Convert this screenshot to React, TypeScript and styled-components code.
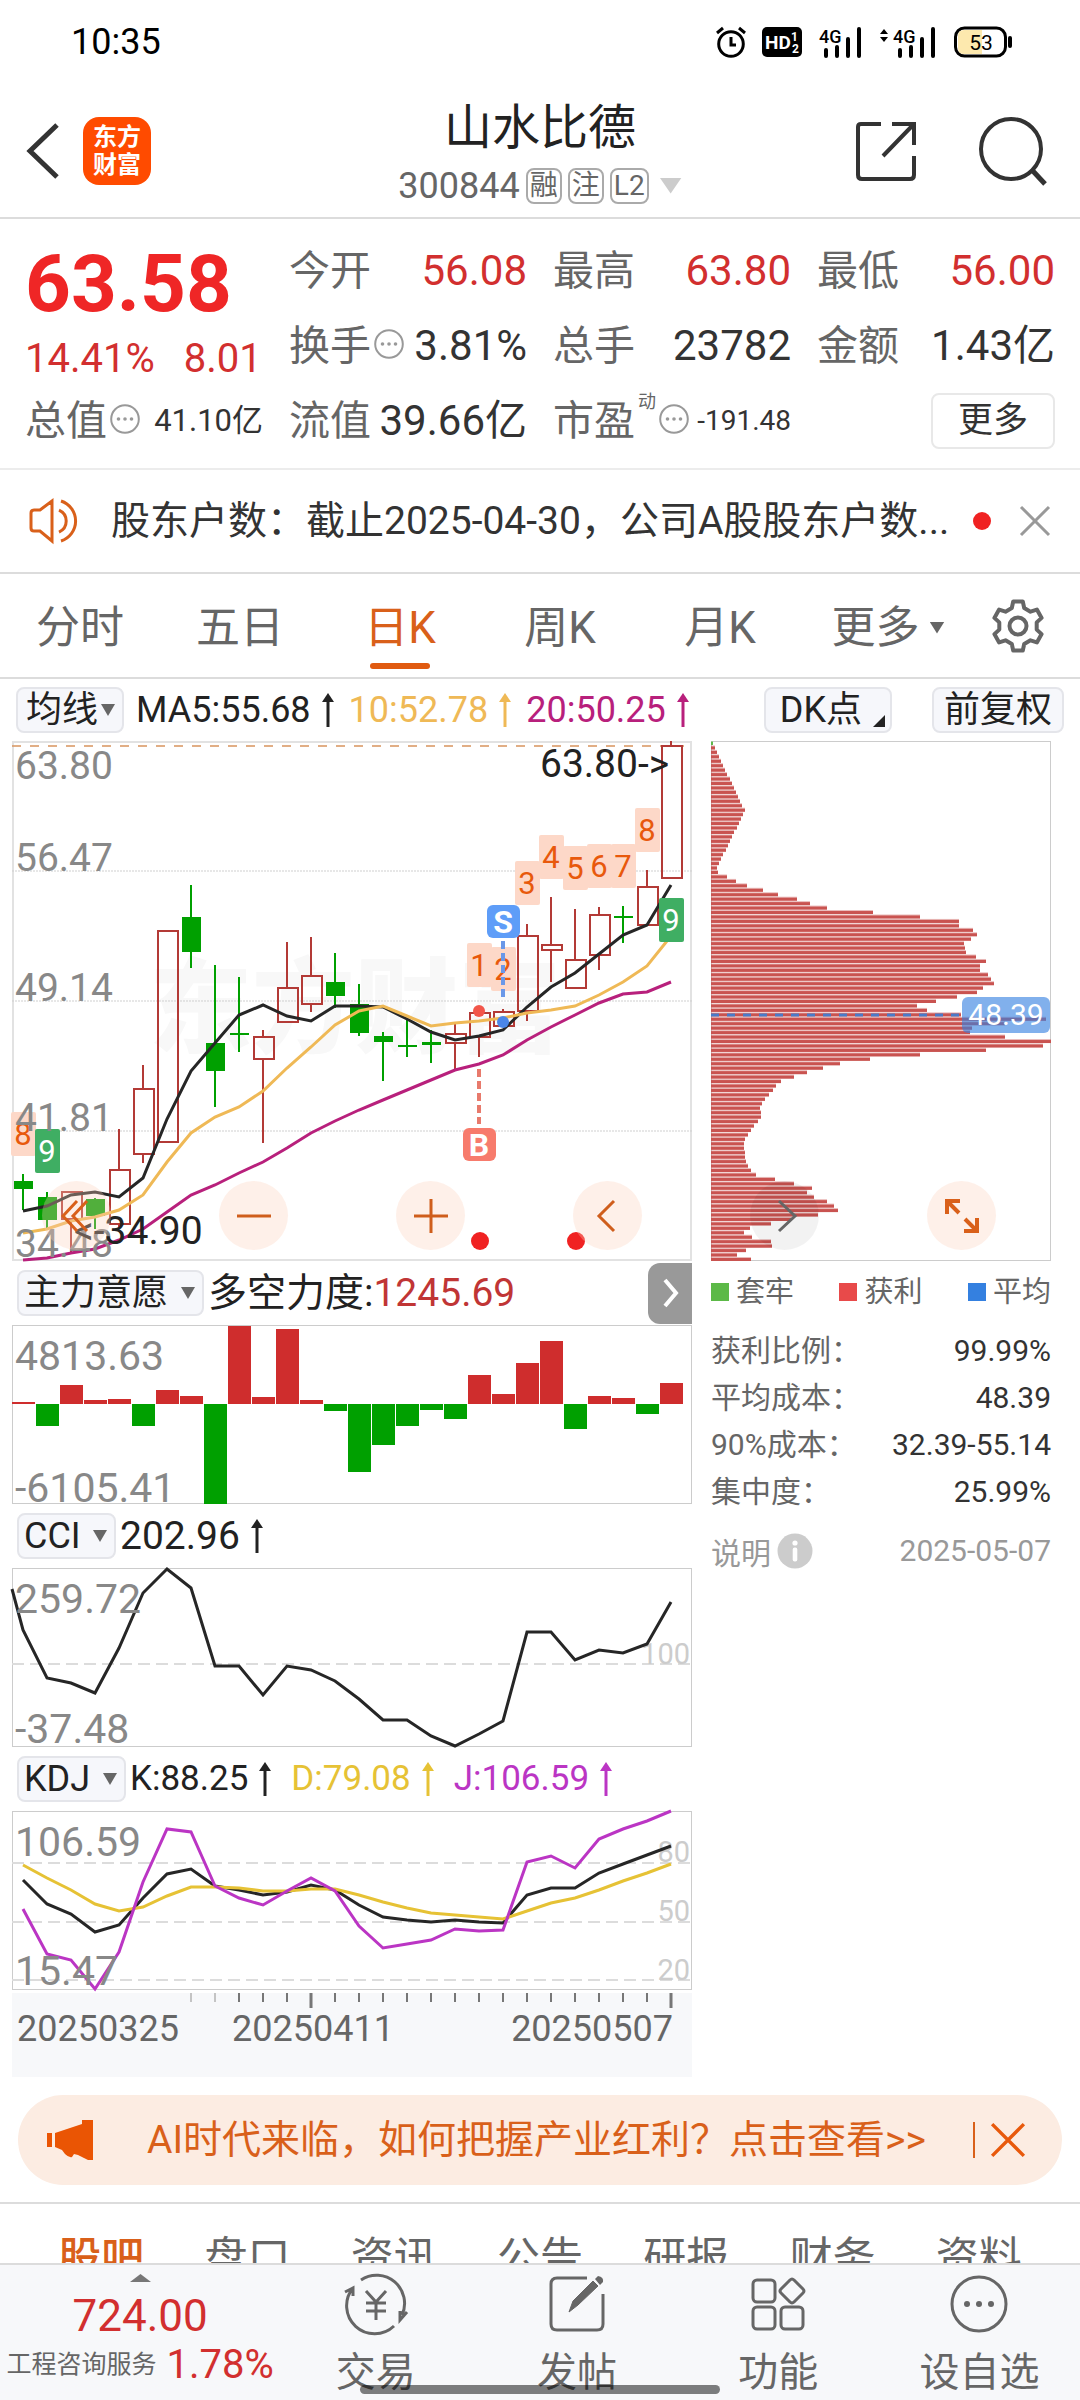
import React from "react";
import styled, { createGlobalStyle } from "styled-components";

const C = {
  ink: "#333333",
  sub: "#666666",
  faint: "#999999",
  red: "#d22f2f",
  orange: "#d9601a",
  line: "#dcdcdc",
  up: "#b33a36",
  upFill: "#cf2d2d",
  down: "#00a000",
  ma5: "#262626",
  ma10: "#efb956",
  ma20: "#b8207c",
  dYellow: "#e6c235",
  jPurple: "#bb35c4",
  panel: "#f7f8fa",
};

const Global = createGlobalStyle`
  *, *::before, *::after { box-sizing: border-box; }
  html, body { margin: 0; background: #fff; }
  body, button, select { font-family: Roboto, "Noto Sans CJK SC", sans-serif; }
  button, select { margin: 0; padding: 0; border: 0; background: none; color: inherit; font-size: inherit; cursor: pointer; }
  svg { display: block; flex: none; overflow: visible; }
  svg text { font-family: Roboto, "Noto Sans CJK SC", sans-serif; }
`;

const Screen = styled.div`
  display: flex;
  flex-direction: column;
  height: 100vh;
  background: #fff;
  color: ${C.ink};
  overflow: hidden;
`;

const Scroll = styled.main`
  flex: 1;
  min-height: 0;
  overflow: hidden;
`;

/* ---------- status bar ---------- */

const StatusBar = styled.div`
  display: flex;
  align-items: center;
  justify-content: space-between;
  height: 84px;
  padding: 0 68px 0 71px;
  color: #000;
  font-size: 36px;
  line-height: 40px;
`;

const StatusIcons = styled.div`
  display: flex;
  align-items: center;
  gap: 16px;
`;

/* ---------- header ---------- */

const Header = styled.header`
  display: grid;
  grid-template-columns: 1fr auto 1fr;
  align-items: center;
  height: 135px;
  padding: 0 26px;
  border-bottom: 2px solid ${C.line};
`;

const HeaderSide = styled.div<{ $end?: boolean }>`
  display: flex;
  align-items: center;
  justify-content: ${(p) => (p.$end ? "flex-end" : "flex-start")};
  gap: ${(p) => (p.$end ? 62 : 23)}px;
`;

const IconButton = styled.button`
  display: flex;
  align-items: center;
  justify-content: center;
`;

const Logo = styled.a`
  display: flex;
  flex-direction: column;
  justify-content: center;
  width: 68px;
  height: 68px;
  border-radius: 16px;
  background: #ff4b00;
  color: #fff;
  font-size: 24px;
  font-weight: 700;
  line-height: 28px;
  text-align: center;
  text-decoration: none;
`;

const TitleBlock = styled.div`
  display: flex;
  flex-direction: column;
  align-items: center;
  gap: 10px;
`;

const Title = styled.h1`
  margin: 0;
  color: #222;
  font-size: 48px;
  font-weight: 400;
  line-height: 60px;
`;

const CodeRow = styled.div`
  display: flex;
  align-items: center;
  gap: 6px;
  color: ${C.sub};
  font-size: 36px;
  line-height: 36px;
`;

const Tag = styled.span`
  min-width: 36px;
  height: 36px;
  padding: 0 2px;
  border: 2px solid #aaa;
  border-radius: 8px;
  font-size: 28px;
  line-height: 32px;
  text-align: center;
`;

const FoldButton = styled(IconButton)`
  margin-left: 5px;
`;

/* ---------- quote ---------- */

const Quote = styled.section`
  display: grid;
  grid-template-columns: repeat(4, 1fr);
  grid-template-rows: repeat(3, 75px);
  column-gap: 26px;
  padding: 14px 25px 10px;
  border-bottom: 2px solid #ececec;
`;

const PriceBlock = styled.div`
  display: flex;
  flex-direction: column;
  grid-row: span 2;
  gap: 11px;
  padding-top: 9px;
`;

const Price = styled.div`
  color: #ef2626;
  font-size: 80px;
  font-weight: 700;
  line-height: 84px;
`;

const Change = styled.div`
  display: flex;
  gap: 29px;
  color: ${C.red};
  font-size: 40px;
  line-height: 44px;
`;

const Cell = styled.div`
  display: flex;
  align-items: center;
  justify-content: space-between;
  white-space: nowrap;
`;

const Label = styled.span`
  display: flex;
  align-items: center;
  gap: 3px;
  color: ${C.sub};
  font-size: 41px;
  line-height: 48px;
`;

const Sup = styled.sup`
  align-self: flex-start;
  margin-top: -5px;
  font-size: 18px;
  line-height: 20px;
`;

const Value = styled.span<{ $red?: boolean; $size?: number }>`
  color: ${(p) => (p.$red ? C.red : C.ink)};
  font-size: ${(p) => p.$size ?? 42}px;
  line-height: 48px;
`;

const MoreButton = styled.button`
  width: 124px;
  height: 56px;
  margin-left: auto;
  border: 2px solid #e8e8e8;
  border-radius: 8px;
  font-size: 35px;
  line-height: 48px;
`;

/* ---------- notice ---------- */

const Notice = styled.div`
  display: flex;
  align-items: center;
  height: 104px;
  padding: 0 30px 0 29px;
  border-bottom: 2px solid ${C.line};
`;

const NoticeText = styled.span`
  flex: 1;
  margin-left: 29px;
  font-size: 39px;
  line-height: 48px;
  white-space: nowrap;
`;

const Dot = styled.i`
  width: 18px;
  height: 18px;
  margin-right: 29px;
  border-radius: 50%;
  background: #f02222;
`;

/* ---------- period tabs ---------- */

const PeriodTabs = styled.nav`
  display: grid;
  grid-template-columns: repeat(5, 160fr) 176fr 84fr;
  height: 105px;
  padding-right: 20px;
  border-bottom: 2px solid ${C.line};
`;

const PeriodTab = styled.button<{ $on?: boolean }>`
  display: flex;
  align-items: center;
  justify-content: center;
  gap: 10px;
  position: relative;
  padding-top: 4px;
  color: ${(p) => (p.$on ? C.orange : C.sub)};
  font-size: 44px;
  line-height: 52px;

  &::after {
    content: ${(p) => (p.$on ? '""' : "none")};
    position: absolute;
    bottom: 8px;
    width: 60px;
    height: 6px;
    border-radius: 3px;
    background: #e05a10;
  }
`;

const Caret = styled.i<{ $w?: number; $h?: number; $color?: string }>`
  flex: none;
  width: ${(p) => p.$w ?? 14}px;
  height: ${(p) => p.$h ?? 12}px;
  background: ${(p) => p.$color ?? C.sub};
  clip-path: polygon(0 0, 100% 0, 50% 100%);
`;

/* ---------- indicator headers ---------- */

const MaBar = styled.div`
  display: flex;
  align-items: center;
  gap: 12px;
  height: 62px;
  padding: 0 16px;
  font-size: 36px;
  line-height: 46px;
`;

const IndicatorBar = styled.div`
  display: flex;
  align-items: center;
  gap: 4px;
  position: relative;
  height: 64px;
  padding: 0 0 0 5px;
  font-size: 39px;
  line-height: 46px;
`;

const Picker = styled.span`
  display: inline-flex;
  align-items: center;
  position: relative;

  select {
    height: 46px;
    padding: 0 33px 0 5px;
    border: 2px solid #e4e5ea;
    border-radius: 8px;
    background: #f6f7fb;
    appearance: none;
    color: #222;
    font-size: 36px;
    line-height: 42px;
  }

  ${Caret} {
    position: absolute;
    right: 9px;
    pointer-events: none;
  }
`;

const TightPicker = styled(Picker)`
  select {
    padding: 0 23px 0 8px;
  }
`;

const Reading = styled.span<{ $color?: string; $size?: number; $gap?: number }>`
  display: inline-flex;
  align-items: center;
  gap: ${(p) => p.$gap ?? 11}px;
  color: ${(p) => p.$color ?? "#222"};
  font-size: ${(p) => p.$size ?? 39}px;
  white-space: nowrap;
`;

const Readings = styled.div<{ $gap: number }>`
  display: flex;
  align-items: center;
  gap: ${(p) => p.$gap}px;
`;

const ChipGroup = styled.div`
  display: flex;
  gap: 40px;
  margin-left: auto;
`;

const Chip = styled.button<{ $corner?: boolean }>`
  position: relative;
  height: 46px;
  padding: ${(p) => (p.$corner ? "0 28px 0 14px" : "0 10px")};
  border: 2px solid #e4e5ea;
  border-radius: 8px;
  background: #f6f7fb;
  color: #222;
  font-size: 36px;
  line-height: 42px;

  &::after {
    content: ${(p) => (p.$corner ? '""' : "none")};
    position: absolute;
    right: 5px;
    bottom: 4px;
    width: 12px;
    height: 12px;
    background: #222;
    clip-path: polygon(100% 0, 100% 100%, 0 100%);
  }
`;

const ExpandTab = styled.button`
  display: flex;
  align-items: center;
  justify-content: center;
  width: 44px;
  height: 61px;
  margin-left: auto;
  border-radius: 12px 0 0 12px;
  background: #999;
`;

/* ---------- charts ---------- */

const Charts = styled.section`
  display: grid;
  grid-template-columns: 680fr 340fr;
  column-gap: 19px;
  padding: 0 29px 0 12px;
`;

const Frame = styled.div<{ $edge?: string; $w?: number }>`
  position: relative;
  box-shadow: inset 0 0 0 ${(p) => p.$w ?? 1}px ${(p) => p.$edge ?? "#cccccc"};

  > svg {
    width: 100%;
    height: auto;
  }
`;

const Overlay = styled.div<{ $l: number; $r: number }>`
  position: absolute;
  left: ${(p) => p.$l}px;
  right: ${(p) => p.$r}px;
  bottom: 11px;
  display: flex;
  justify-content: space-between;
`;

const RoundButton = styled.button<{ $gray?: boolean }>`
  display: flex;
  align-items: center;
  justify-content: center;
  width: 69px;
  height: 69px;
  border-radius: 50%;
  background: ${(p) => (p.$gray ? "rgba(0,0,0,.05)" : "rgba(252,208,186,.32)")};
`;

const TimeAxis = styled.div`
  margin-top: 3px;
  background: ${C.panel};

  > svg {
    width: 100%;
    height: auto;
  }
`;

/* ---------- chip distribution details ---------- */

const Legend = styled.ul`
  display: flex;
  justify-content: space-between;
  margin: 0;
  padding: 8px 0 12px;
  list-style: none;
`;

const LegendItem = styled.li<{ $color: string }>`
  display: flex;
  align-items: center;
  gap: 7px;
  color: ${C.sub};
  font-size: 29px;
  line-height: 46px;

  &::before {
    content: "";
    width: 18px;
    height: 18px;
    background: ${(p) => p.$color};
  }
`;

const Stats = styled.table`
  width: 100%;
  border-collapse: collapse;
  font-size: 30px;
  line-height: 47px;

  th {
    padding: 0;
    color: ${C.sub};
    font-weight: 400;
    text-align: left;
    white-space: nowrap;
  }
  td {
    padding: 0;
    text-align: right;
    white-space: nowrap;
  }
`;

const Footnote = styled.div`
  display: flex;
  align-items: center;
  justify-content: space-between;
  margin-top: 13px;
  color: ${C.faint};
  font-size: 30px;
  line-height: 46px;
`;

const Explain = styled.button`
  display: flex;
  align-items: center;
  gap: 6px;
`;

/* ---------- banner ---------- */

const Banner = styled.aside`
  display: flex;
  align-items: center;
  height: 90px;
  margin: 18px 18px 17px;
  padding: 0 37px 0 29px;
  border-radius: 45px;
  background: #fcece2;
  color: ${C.orange};
`;

const BannerLink = styled.a`
  flex: 1;
  margin-left: 54px;
  color: inherit;
  font-size: 39px;
  line-height: 48px;
  text-decoration: none;
  white-space: nowrap;
`;

const Divider = styled.i`
  width: 2px;
  height: 36px;
  margin-right: 16px;
  background: ${C.orange};
`;

const ContentTabs = styled.nav`
  display: flex;
  padding: 24px 28px 0;
  border-top: 2px solid ${C.line};
`;

const ContentTab = styled.button<{ $on?: boolean }>`
  flex: 1;
  color: ${(p) => (p.$on ? C.orange : C.sub)};
  font-size: 43px;
  font-weight: ${(p) => (p.$on ? 500 : 400)};
  line-height: 60px;
`;

/* ---------- bottom bar ---------- */

const BottomBar = styled.footer`
  display: grid;
  grid-template-columns: 275fr repeat(4, 201fr);
  position: relative;
  height: 137px;
  border-top: 2px solid ${C.line};
  background: #f7f8fa;
`;

const IndexCell = styled.button`
  display: flex;
  flex-direction: column;
  align-items: center;
  padding: 9px 0 0 5px;
  color: ${C.red};
`;

const IndexValue = styled.span`
  margin-top: 9px;
  font-size: 44px;
  line-height: 50px;
`;

const IndexRow = styled.span`
  display: flex;
  align-items: center;
  gap: 10px;
  font-size: 40px;
  line-height: 48px;
  white-space: nowrap;
`;

const IndexName = styled.span`
  color: ${C.sub};
  font-size: 25px;
`;

const NavButton = styled.button`
  display: flex;
  flex-direction: column;
  align-items: center;
  gap: 13px;
  padding-top: 9px;
  color: ${C.sub};
  font-size: 40px;
  line-height: 52px;
`;

const HomeBar = styled.i`
  position: absolute;
  left: 50%;
  bottom: 6px;
  width: 360px;
  height: 9px;
  margin-left: -180px;
  border-radius: 5px;
  background: rgba(0, 0, 0, 0.5);
`;

/* ---------- icons ---------- */

const Dots = ({ size = 30 }: { size?: number }) => (
  <svg width={size} height={size} viewBox="0 0 30 30" fill="none">
    <circle cx="15" cy="13" r="13.8" stroke="#999" strokeWidth="2" />
    <g fill="#999">
      <circle cx="8.5" cy="13" r="1.8" />
      <circle cx="15" cy="13" r="1.8" />
      <circle cx="21.5" cy="13" r="1.8" />
    </g>
  </svg>
);

const Close = ({ size, color, w }: { size: number; color: string; w: number }) => (
  <svg width={size} height={size} viewBox="0 0 30 30" stroke={color} strokeWidth={w} fill="none">
    <path d="M1 1L29 29M29 1L1 29" />
  </svg>
);

const UpArrow = ({ color = "#222" }: { color?: string }) => (
  <svg width="12" height="34" viewBox="0 0 12 34">
    <path d="M6 0L12 9H0Z" fill={color} />
    <path d="M6 6V34" stroke={color} strokeWidth="3" />
  </svg>
);

const gearPath = (() => {
  const pts: string[] = [];
  for (let k = 0; k < 6; k++) {
    const base = -90 + k * 60;
    [
      [-19, 19],
      [-11, 25],
      [11, 25],
      [19, 19],
    ].forEach(([a, r]) => {
      const t = ((base + a) * Math.PI) / 180;
      pts.push(`${(27 + r * Math.cos(t)).toFixed(1)} ${(27 + r * Math.sin(t)).toFixed(1)}`);
    });
  }
  return `M${pts.join("L")}Z`;
})();

const Signal = ({ roaming }: { roaming?: boolean }) => (
  <svg width={roaming ? 58 : 46} height="32" viewBox={roaming ? "-12 0 58 32" : "0 0 46 32"}>
    {roaming && <path d="M-12 8L-8 3L-4 8ZM-12 11L-8 16L-4 11Z" fill="#000" />}
    <text x="1" y="17" fontSize="18" fontWeight="500">4G</text>
    <path d="M8 24V30M19 21V30M30 13V30M41 3V30" stroke="#000" strokeWidth="4" strokeLinecap="round" />
  </svg>
);

/* ---------- chart data ---------- */

const STEP = 24;
const cx = (i: number) => 11 + STEP * i;
const line = (ys: number[]) => ys.map((y, i) => `${cx(i)},${y}`).join(" ");

type Candle = [dir: "u" | "d", high: number, top: number, bottom: number, low: number];
const candles: Candle[] = [
  ["d", 433, 440, 448, 469], ["d", 451, 456, 479, 488], ["u", 450, 451, 478, 511], ["d", 457, 458, 475, 488],
  ["u", 388, 429, 483, 487], ["u", 324, 348, 413, 422], ["u", 190, 190, 401, 401], ["d", 144, 176, 211, 227],
  ["d", 224, 302, 330, 366], ["d", 236, 292, 294, 311], ["u", 289, 296, 318, 402], ["u", 201, 247, 281, 281],
  ["u", 196, 235, 263, 271], ["d", 212, 241, 255, 267], ["d", 243, 263, 292, 295], ["d", 291, 295, 301, 340],
  ["d", 279, 304, 306, 316], ["d", 289, 301, 304, 322], ["u", 283, 293, 302, 328], ["u", 266, 272, 296, 316],
  ["u", 268, 271, 285, 285], ["u", 183, 195, 270, 280], ["u", 156, 204, 209, 241], ["u", 168, 219, 247, 247],
  ["u", 166, 174, 214, 229], ["d", 165, 175, 177, 202], ["u", 129, 146, 184, 184], ["u", 0, 5, 137, 138],
];
const ma5 = [470, 465, 454, 451, 456, 437, 378, 330, 302, 274, 264, 275, 280, 265, 265, 266, 278, 291, 299, 295, 289, 266, 246, 232, 213, 194, 184, 144];
const ma10 = [492, 488, 480, 476, 469, 454, 421, 392, 376, 366, 350, 327, 306, 284, 270, 265, 275, 285, 282, 280, 277, 272, 269, 265, 254, 241, 225, 195];
const ma20 = [519, 517, 512, 508, 499, 488, 471, 454, 444, 432, 421, 407, 392, 380, 369, 359, 349, 339, 329, 323, 314, 299, 286, 274, 262, 253, 251, 241];

const signals: [index: number, y: number, label: string, done?: boolean][] = [
  [0, 371, "8"], [1, 388, "9", true], [19, 202, "1"], [20, 206, "2"], [21, 120, "3"], [22, 94, "4"],
  [23, 105, "5"], [24, 103, "6"], [25, 103, "7"], [26, 67, "8"],
];

const force = [2, -22, 19, 4, 5, -22, 14, 8, -100, 78, 7, 75, 4, -7, -68, -41, -22, -6, -15, 29, 10, 41, 63, -25, 8, 6, -10, 21];
const cci = [62, 110, 115, 125, 80, 25, 1, 20, 98, 98, 127, 98, 102, 113, 131, 152, 152, 168, 178, 166, 153, 64, 64, 92, 82, 85, 76, 34];
const kLine = [69, 93, 103, 121, 114, 87, 63, 58, 75, 79, 84, 81, 74, 79, 94, 106, 109, 111, 109, 111, 112, 84, 77, 77, 62, 53, 44, 35];
const dLine = [54, 67, 79, 93, 100, 96, 85, 76, 76, 77, 80, 80, 78, 78, 84, 91, 97, 102, 104, 106, 108, 100, 92, 87, 79, 70, 62, 53];
const jLine = [98, 143, 149, 178, 141, 71, 18, 21, 75, 87, 94, 80, 67, 80, 115, 137, 133, 129, 118, 120, 119, 51, 45, 57, 28, 18, 10, 0];

const chips = [
  2, 4, 6, 8, 10, 12, 14, 16, 19, 21, 23, 25, 27, 29, 31, 34, 32, 30, 28, 26, 23, 21, 19, 17, 15, 12, 10, 8, 6, 7, 16, 25, 36, 52, 67,
  86, 99, 116, 162, 209, 248, 248, 262, 266, 260, 253, 254, 255, 265, 275, 269, 269, 277, 280, 283, 272, 266, 246, 225, 206, 216, 250,
  335, 294, 261, 259, 294, 340, 332, 275, 209, 159, 129, 112, 96, 83, 70, 65, 62, 58, 54, 51, 49, 50, 50, 47, 43, 40, 37, 34, 33, 33,
  34, 34, 35, 37, 40, 45, 64, 83, 101, 96, 103, 116, 123, 127, 107, 80, 60, 39, 33, 41, 60, 61, 35, 26, 40,
];

const AxisText = ({ y, children, size = 41 }: { y: number; children: string; size?: number }) => (
  <text x="3" y={y} fontSize={size} fill="#888">{children}</text>
);

const RightText = ({ y, children }: { y: number; children: string }) => (
  <text x="678" y={y} fontSize="29" fill="#ccc" textAnchor="end">{children}</text>
);

const KLineChart = () => (
  <svg viewBox="0 0 680 520" role="img" aria-label="日K">
    <text x="137" y="304" fontSize="103" fontWeight="900" fill="#f8f8f8">东方财富</text>
    {[130, 260, 390].map((y) => (
      <path key={y} d={`M0 ${y}H680`} stroke="#cfcfcf" strokeDasharray="2 1" />
    ))}
    <path d="M0 5H672" stroke="#d99a66" strokeWidth="2" strokeOpacity=".8" strokeDasharray="9 9" />
    {signals.map(([i, y, label, done]) => (
      <g key={`${i}-${label}`}>
        <rect x={cx(i) - 12} y={y} width="25" height="44" rx="2" fill={done ? "#3fae63" : "#fdd8c8"} />
        <text x={cx(i)} y={y + 33} fontSize="31" textAnchor="middle" fill={done ? "#fff" : "#e8590c"}>{label}</text>
      </g>
    ))}
    {candles.map(([dir, high, top, bottom, low], i) =>
      dir === "u" ? (
        <g key={i} stroke={C.up} strokeWidth="2" fill="none">
          <path d={`M${cx(i)} ${high}V${top}M${cx(i)} ${bottom}V${low}`} />
          <rect x={cx(i) - 9} y={top} width="20" height={bottom - top} />
        </g>
      ) : (
        <g key={i}>
          <path d={`M${cx(i)} ${high}V${low}`} stroke={C.down} strokeWidth="2" />
          <rect x={cx(i) - 9} y={top} width="19" height={bottom - top} fill={C.down} />
        </g>
      )
    )}
    <g fill="none" strokeWidth="3">
      <polyline points={line(ma20)} stroke={C.ma20} />
      <polyline points={line(ma5)} stroke={C.ma5} />
      <polyline points={line(ma10)} stroke={C.ma10} />
    </g>
    <rect x="647" y="157" width="25" height="44" rx="2" fill="#3fae63" />
    <text x="659" y="190" fontSize="31" textAnchor="middle" fill="#fff">9</text>
    <g strokeWidth="4" strokeDasharray="8 4" fill="none">
      <path d="M491 200V256" stroke="#6a98e8" />
      <path d="M467 328V383" stroke="#e87a6c" />
    </g>
    <circle cx="467" cy="270" r="6" fill="#f2564a" />
    <circle cx="491" cy="281" r="6" fill="#4a86e8" />
    <g fontSize="32" fontWeight="700" textAnchor="middle" fill="#fff">
      <rect x="475" y="164" width="33" height="33" rx="6" fill="#5e9df8" />
      <text x="491" y="192">S</text>
      <rect x="451" y="387" width="33" height="33" rx="6" fill="#f77b6c" />
      <text x="467" y="415">B</text>
    </g>
    <AxisText y={38} size={39}>63.80</AxisText>
    <AxisText y={130} size={39}>56.47</AxisText>
    <AxisText y={260} size={39}>49.14</AxisText>
    <AxisText y={390} size={39}>41.81</AxisText>
    <AxisText y={516} size={39}>34.48</AxisText>
    <text x="528" y="36" fontSize="39" fill="#222">63.80-&gt;</text>
    <text x="62" y="503" fontSize="39" fill="#222">&lt;-34.90</text>
    <circle cx="468" cy="500" r="9" fill="#f02222" />
    <circle cx="564" cy="500" r="9" fill="#f02222" />
  </svg>
);

const ChipChart = () => {
  const pitch = 516 / (chips.length - 1);
  return (
    <svg viewBox="0 0 340 520" role="img" aria-label="筹码分布">
      {chips.map((w, i) => (
        <g key={i} fill={i ? "#c95350" : "#5fb84a"}>
          <rect x="0" y={i * pitch} width={w} height="4" fillOpacity=".4" />
          <rect x="0" y={1 + i * pitch} width={w} height="3" />
        </g>
      ))}
      <path d="M0 274H251" stroke="#4a7ac8" strokeWidth="3" strokeDasharray="8 8" />
      <rect x="251" y="256" width="88" height="36" rx="6" fill="#3480e0" fillOpacity=".62" />
      <text x="295" y="284" fontSize="30" textAnchor="middle" fill="#fff">48.39</text>
    </svg>
  );
};

const ForceChart = () => (
  <svg viewBox="0 0 680 179" role="img" aria-label="主力意愿">
    {force.map((v, i) => (
      <rect key={i} x={i * STEP} y={v > 0 ? 79 - v : 79} width="23" height={Math.abs(v)} fill={v > 0 ? C.upFill : C.down} />
    ))}
    <AxisText y={45}>4813.63</AxisText>
    <AxisText y={177}>-6105.41</AxisText>
  </svg>
);

const CciChart = () => (
  <svg viewBox="0 0 680 179" role="img" aria-label="CCI">
    <path d="M0 96H680" stroke="#dcdcdc" strokeWidth="2" strokeDasharray="12 6" />
    <RightText y={96}>100</RightText>
    <polyline points={`0,21 ${line(cci)}`} fill="none" stroke={C.ma5} strokeWidth="3" />
    <AxisText y={45}>259.72</AxisText>
    <AxisText y={175}>-37.48</AxisText>
  </svg>
);

const KdjChart = () => (
  <svg viewBox="0 0 680 179" role="img" aria-label="KDJ">
    {[52, 111, 169].map((y) => (
      <path key={y} d={`M0 ${y}H680`} stroke="#dcdcdc" strokeWidth="2" strokeDasharray="12 6" />
    ))}
    <RightText y={51}>80</RightText>
    <RightText y={110}>50</RightText>
    <RightText y={169}>20</RightText>
    <g fill="none" strokeWidth="3">
      <polyline points={line(kLine)} stroke={C.ma5} />
      <polyline points={line(dLine)} stroke={C.dYellow} />
      <polyline points={line(jLine)} stroke={C.jPurple} />
    </g>
    <AxisText y={45}>106.59</AxisText>
    <AxisText y={174}>15.47</AxisText>
  </svg>
);

const TimeTicks = () => (
  <svg viewBox="0 0 680 84" role="img" aria-label="日期">
    {Array.from({ length: 21 }, (_, k) => k + 7).map((i) => {
      const major = i === 12 || i === 27;
      return (
        <path key={i} d={`M${cx(i)} 0V${major ? 15 : 9}`} stroke={i < 9 ? "#c4c4c4" : "#777"} strokeWidth={major ? 3 : 2} />
      );
    })}
    <g fontSize="36" fill="#666">
      <text x="5" y="48">20250325</text>
      <text x="220" y="48">20250411</text>
      <text x="661" y="48" textAnchor="end">20250507</text>
    </g>
  </svg>
);

const Select = ({ value, label }: { value: string; label: string }) => (
  <Picker>
    <select aria-label={label} defaultValue={value}>
      <option>{value}</option>
    </select>
    <Caret />
  </Picker>
);

export default function App() {
  return (
    <Screen>
      <Global />
      <Scroll>
        <StatusBar>
          <span>10:35</span>
          <StatusIcons>
            <svg width="30" height="32" viewBox="0 0 30 32" fill="none" stroke="#000" strokeWidth="3">
              <circle cx="15" cy="18" r="12.3" />
              <path d="M15 11V19H20M1 7L7 2M29 7L23 2" />
            </svg>
            <svg width="40" height="32" viewBox="0 0 40 32">
              <rect y="1" width="40" height="30" rx="5" />
              <g fill="#fff" fontWeight="700">
                <text x="3" y="23" fontSize="19">HD</text>
                <text x="29" y="15" fontSize="12">1</text>
                <text x="30" y="27" fontSize="12">2</text>
              </g>
            </svg>
            <Signal />
            <Signal roaming />
            <svg width="58" height="32" viewBox="0 0 58 32">
              <rect x="1.5" y="2" width="50" height="28" rx="9" fill="#fff" stroke="#000" strokeWidth="3" />
              <path d="M10 4H28V28H10Q4 28 4 22V10Q4 4 10 4Z" fill="#fde9ae" />
              <rect x="54" y="10" width="4" height="12" rx="2" />
              <text x="27" y="24" fontSize="21" textAnchor="middle">53</text>
            </svg>
          </StatusIcons>
        </StatusBar>

        <Header>
          <HeaderSide>
            <IconButton aria-label="返回">
              <svg width="34" height="56" viewBox="0 0 34 56" fill="none" stroke="#333" strokeWidth="5">
                <path d="M31 2L4 28L31 54" />
              </svg>
            </IconButton>
            <Logo href="#home">
              <span>东方</span>
              <span>财富</span>
            </Logo>
          </HeaderSide>
          <TitleBlock>
            <Title>山水比德</Title>
            <CodeRow>
              300844
              <Tag>融</Tag>
              <Tag>注</Tag>
              <Tag>L2</Tag>
              <FoldButton aria-label="展开">
                <Caret $w={22} $h={16} $color="#cccccc" />
              </FoldButton>
            </CodeRow>
          </TitleBlock>
          <HeaderSide $end>
            <IconButton aria-label="分享">
              <svg width="60" height="60" viewBox="0 0 60 60" fill="none" stroke="#333" strokeWidth="4">
                <path d="M25 3H5Q2 3 2 6V54Q2 58 6 58H54Q58 58 58 54V35M36 3H58V24M57 4L27 35" />
              </svg>
            </IconButton>
            <IconButton aria-label="搜索">
              <svg width="76" height="70" viewBox="0 0 76 70" fill="none" stroke="#333" strokeWidth="4">
                <circle cx="33" cy="33" r="30" />
                <path d="M54 54L67 68" strokeWidth="5" />
              </svg>
            </IconButton>
          </HeaderSide>
        </Header>

        <Quote>
          <PriceBlock>
            <Price>63.58</Price>
            <Change>
              <span>14.41%</span>
              <span>8.01</span>
            </Change>
          </PriceBlock>
          <Cell><Label>今开</Label><Value $red>56.08</Value></Cell>
          <Cell><Label>最高</Label><Value $red>63.80</Value></Cell>
          <Cell><Label>最低</Label><Value $red>56.00</Value></Cell>
          <Cell><Label>换手<Dots /></Label><Value>3.81%</Value></Cell>
          <Cell><Label>总手</Label><Value>23782</Value></Cell>
          <Cell><Label>金额</Label><Value>1.43亿</Value></Cell>
          <Cell><Label>总值<Dots /></Label><Value $size={31}>41.10亿</Value></Cell>
          <Cell><Label>流值</Label><Value>39.66亿</Value></Cell>
          <Cell><Label>市盈<Sup>动</Sup><Dots /></Label><Value $size={28}>-191.48</Value></Cell>
          <Cell><MoreButton>更多</MoreButton></Cell>
        </Quote>

        <Notice>
          <svg width="53" height="46" viewBox="0 0 53 46" fill="none" stroke={C.orange} strokeWidth="3">
            <path d="M23 3V43L11 33H5Q2 33 2 30V15Q2 12 5 12H11Z" />
            <path d="M30 12A12 12 0 0 1 30 34M32 3A21 21 0 0 1 32 43" />
          </svg>
          <NoticeText>股东户数：截止2025-04-30，公司A股股东户数...</NoticeText>
          <Dot />
          <IconButton aria-label="关闭"><Close size={30} color="#999" w={3} /></IconButton>
        </Notice>

        <PeriodTabs>
          <PeriodTab>分时</PeriodTab>
          <PeriodTab>五日</PeriodTab>
          <PeriodTab $on>日K</PeriodTab>
          <PeriodTab>周K</PeriodTab>
          <PeriodTab>月K</PeriodTab>
          <PeriodTab>更多<Caret $w={15} /></PeriodTab>
          <IconButton aria-label="设置">
            <svg width="54" height="54" viewBox="0 0 54 54" fill="none" stroke="#666" strokeWidth="4" strokeLinejoin="round">
              <path d={gearPath} />
              <circle cx="27" cy="27" r="8.5" />
            </svg>
          </IconButton>
        </PeriodTabs>

        <MaBar>
          <TightPicker>
            <select aria-label="主图指标" defaultValue="均线"><option>均线</option></select>
            <Caret />
          </TightPicker>
          <Readings $gap={15}>
            <Reading $size={36}>MA5:55.68<UpArrow /></Reading>
            <Reading $size={36} $color={C.ma10}>10:52.78<UpArrow color={C.ma10} /></Reading>
            <Reading $size={36} $color={C.ma20}>20:50.25<UpArrow color={C.ma20} /></Reading>
          </Readings>
          <ChipGroup>
            <Chip $corner>DK点</Chip>
            <Chip>前复权</Chip>
          </ChipGroup>
        </MaBar>

        <Charts>
          <div>
            <Frame $edge="#e2e2e2" $w={2}>
              <KLineChart />
              <Overlay $l={30} $r={50}>
                <RoundButton aria-label="最早">
                  <svg width="36" height="36" viewBox="0 0 36 36" fill="none" stroke="#d9601a" strokeWidth="3">
                    <path d="M18 3L4 18L18 33M28 3L14 18L28 33" />
                  </svg>
                </RoundButton>
                <RoundButton aria-label="缩小">
                  <svg width="34" height="34" viewBox="0 0 34 34" stroke="#cf5e1c" strokeWidth="3"><path d="M0 17H34" /></svg>
                </RoundButton>
                <RoundButton aria-label="放大">
                  <svg width="34" height="34" viewBox="0 0 34 34" stroke="#cf5e1c" strokeWidth="3"><path d="M0 17H34M17 0V34" /></svg>
                </RoundButton>
                <RoundButton aria-label="前移">
                  <svg width="36" height="34" viewBox="0 0 36 34" fill="none" stroke="#cf5e1c" strokeWidth="3"><path d="M24 2L9 17L24 32" /></svg>
                </RoundButton>
              </Overlay>
            </Frame>

            <IndicatorBar>
              <Select label="副图指标一" value="主力意愿" />
              <Reading $gap={0}>多空力度:<Reading $color="#c03535">1245.69</Reading></Reading>
              <ExpandTab aria-label="展开">
                <svg width="20" height="30" viewBox="0 0 20 30" fill="none" stroke="#fff" strokeWidth="4"><path d="M5 2L16 15L5 28" /></svg>
              </ExpandTab>
            </IndicatorBar>
            <Frame><ForceChart /></Frame>

            <IndicatorBar>
              <Select label="副图指标二" value="CCI" />
              <Reading>202.96<UpArrow /></Reading>
            </IndicatorBar>
            <Frame><CciChart /></Frame>

            <IndicatorBar>
              <Select label="副图指标三" value="KDJ" />
              <Readings $gap={20}>
                <Reading $size={35}>K:88.25<UpArrow /></Reading>
                <Reading $size={35} $color={C.dYellow}>D:79.08<UpArrow color={C.dYellow} /></Reading>
                <Reading $size={35} $color={C.jPurple}>J:106.59<UpArrow color={C.jPurple} /></Reading>
              </Readings>
            </IndicatorBar>
            <Frame><KdjChart /></Frame>
            <TimeAxis><TimeTicks /></TimeAxis>
          </div>

          <div>
            <Frame>
              <ChipChart />
              <Overlay $l={39} $r={55}>
                <RoundButton $gray aria-label="后移">
                  <svg width="36" height="34" viewBox="0 0 36 34" fill="none" stroke="#666" strokeWidth="3"><path d="M12 2L28 17L12 32" /></svg>
                </RoundButton>
                <RoundButton aria-label="全屏">
                  <svg width="34" height="34" viewBox="0 0 34 34" fill="none" stroke="#d9601a" strokeWidth="4">
                    <path d="M15 2H2V15M2 2L14 14M19 32H32V19M32 32L20 20" />
                  </svg>
                </RoundButton>
              </Overlay>
            </Frame>
            <Legend>
              <LegendItem $color="#5cb947">套牢</LegendItem>
              <LegendItem $color="#e84a4a">获利</LegendItem>
              <LegendItem $color="#3480e0">平均</LegendItem>
            </Legend>
            <Stats>
              <tbody>
                <tr><th scope="row">获利比例：</th><td>99.99%</td></tr>
                <tr><th scope="row">平均成本：</th><td>48.39</td></tr>
                <tr><th scope="row">90%成本：</th><td>32.39-55.14</td></tr>
                <tr><th scope="row">集中度：</th><td>25.99%</td></tr>
              </tbody>
            </Stats>
            <Footnote>
              <Explain>
                说明
                <svg width="36" height="36" viewBox="0 0 36 36">
                  <circle cx="18" cy="18" r="17.5" fill="#ccc" />
                  <circle cx="18" cy="10" r="2.6" fill="#fff" />
                  <rect x="15.7" y="14.5" width="4.6" height="14" rx="2" fill="#fff" />
                </svg>
              </Explain>
              <span>2025-05-07</span>
            </Footnote>
          </div>
        </Charts>

        <Banner>
          <svg width="46" height="40" viewBox="0 0 46 40" fill="#ea5504">
            <path d="M0 13H5V27H0ZM8 13L35 4V0H46V40H41L31 35L27 34L25 37Q22 38 18 34L15 30L8 27Z" />
          </svg>
          <BannerLink href="#topic">AI时代来临，如何把握产业红利？点击查看&gt;&gt;</BannerLink>
          <Divider />
          <IconButton aria-label="关闭广告"><Close size={34} color="#e8590c" w={3} /></IconButton>
        </Banner>

        <ContentTabs>
          <ContentTab $on>股吧</ContentTab>
          <ContentTab>盘口</ContentTab>
          <ContentTab>资讯</ContentTab>
          <ContentTab>公告</ContentTab>
          <ContentTab>研报</ContentTab>
          <ContentTab>财务</ContentTab>
          <ContentTab>资料</ContentTab>
        </ContentTabs>
      </Scroll>

      <BottomBar>
        <IndexCell>
          <svg width="21" height="8" viewBox="0 0 21 8"><path d="M0 8L10.5 0L21 8Z" fill="#777" /></svg>
          <IndexValue>724.00</IndexValue>
          <IndexRow><IndexName>工程咨询服务</IndexName>1.78%</IndexRow>
        </IndexCell>
        <NavButton>
          <svg width="66" height="60" viewBox="0 0 66 60" fill="none" stroke="#666" strokeWidth="3">
            <path d="M18 6A28 28 0 0 1 59 41M51 52A28 28 0 0 1 10 14M2 18L10 14V22M64 38L57 46V37" />
            <path d="M23 17L33 28L43 17M33 28V46M23 29H43M23 37H43" />
          </svg>
          交易
        </NavButton>
        <NavButton>
          <svg width="56" height="60" viewBox="0 0 56 60" fill="none" stroke="#666" strokeWidth="3">
            <path d="M38 4H8Q2 4 2 10V50Q2 56 8 56H48Q54 56 54 50V20" />
            <path d="M20 38L24 27L44 7L49 12L29 31Z" fill="#666" strokeWidth="1" />
            <path d="M46 5L49 2Q55 3 54 8L51 11Z" fill="#666" stroke="none" />
          </svg>
          发帖
        </NavButton>
        <NavButton>
          <svg width="56" height="60" viewBox="0 0 56 60" fill="none" stroke="#666" strokeWidth="3">
            <rect x="3" y="6" width="22" height="22" rx="4" />
            <rect x="3" y="33" width="22" height="22" rx="4" />
            <rect x="31" y="33" width="22" height="22" rx="4" />
            <path d="M40 6L31 15Q29 17 31 19L40 28Q42 30 44 28L53 19Q55 17 53 15L44 6Q42 4 40 6Z" />
          </svg>
          功能
        </NavButton>
        <NavButton>
          <svg width="60" height="60" viewBox="0 0 60 60" fill="none" stroke="#666" strokeWidth="3">
            <circle cx="30" cy="30" r="27" />
            <g fill="#666" stroke="none">
              <circle cx="18" cy="30" r="3" />
              <circle cx="30" cy="30" r="3" />
              <circle cx="42" cy="30" r="3" />
            </g>
          </svg>
          设自选
        </NavButton>
        <HomeBar />
      </BottomBar>
    </Screen>
  );
}
